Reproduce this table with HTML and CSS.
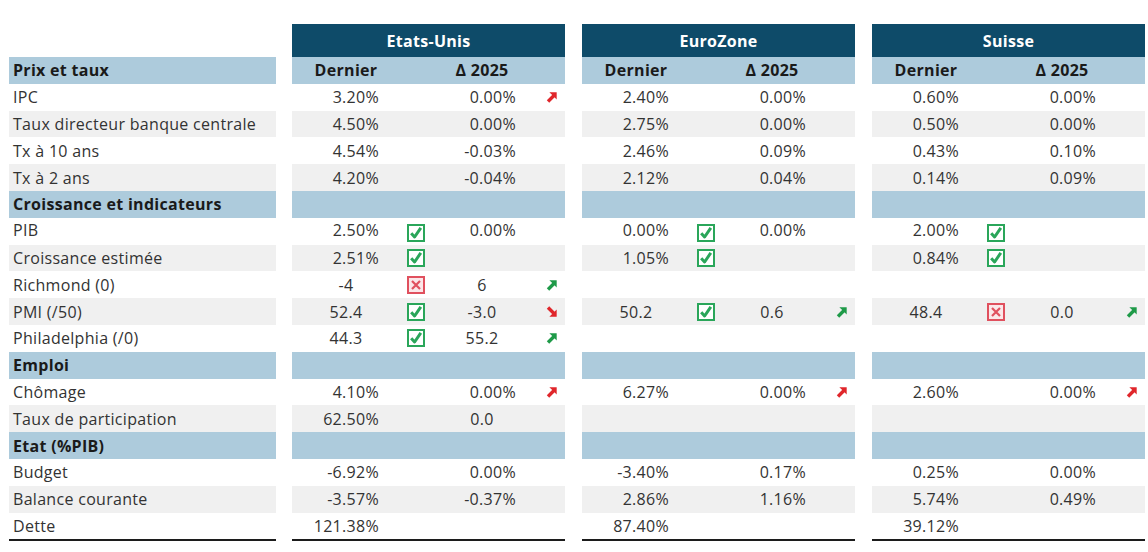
FILE: index.html
```html
<!DOCTYPE html>
<html lang="fr">
<head>
<meta charset="utf-8">
<title>Tableau macro</title>
<link rel="stylesheet" href="styles.css">
</head>
<body>
<svg width="0" height="0" class="defs">
  <defs>
    <symbol id="ok" viewBox="0 0 18 18"><rect x="1" y="1" width="16" height="16" fill="#fff" stroke="#2aa65a" stroke-width="2"/><path d="M4.2 9.2 L7.6 13 L13.8 3.8" fill="none" stroke="#2aa65a" stroke-width="3" stroke-linejoin="round"/></symbol>
    <symbol id="ko" viewBox="0 0 18 18"><rect x="1" y="1" width="16" height="16" fill="#fbe7e9" stroke="#e0505e" stroke-width="2"/><path d="M5 5 L13 13 M13 5 L5 13" fill="none" stroke="#e0505e" stroke-width="2.2"/></symbol>
    <symbol id="upr" viewBox="0 0 12 12"><path d="M2 10.5 L8 4.5" stroke="#e0262b" stroke-width="3.4"/><path d="M3.4 1.3 H10.7 V8.6 Z" fill="#e0262b"/></symbol>
    <symbol id="upg" viewBox="0 0 12 12"><path d="M2 10.5 L8 4.5" stroke="#1e9a48" stroke-width="3.4"/><path d="M3.4 1.3 H10.7 V8.6 Z" fill="#1e9a48"/></symbol>
    <symbol id="dnr" viewBox="0 0 12 12"><path d="M2 1.5 L8 7.5" stroke="#e0262b" stroke-width="3.4"/><path d="M3.4 10.7 H10.7 V3.4 Z" fill="#e0262b"/></symbol>
  </defs>
</svg>

<div class="sheet">
  <div class="labels">
    <div class="title blank"></div>
    <div class="row hdr"><span class="lab b">Prix et taux</span></div>
    <div class="row"><span class="lab">IPC</span></div>
    <div class="row alt"><span class="lab">Taux directeur banque centrale</span></div>
    <div class="row"><span class="lab">Tx à 10 ans</span></div>
    <div class="row alt"><span class="lab">Tx à 2 ans</span></div>
    <div class="row sec"><span class="lab b">Croissance et indicateurs</span></div>
    <div class="row hi"><span class="lab">PIB</span></div>
    <div class="row alt"><span class="lab">Croissance estimée</span></div>
    <div class="row"><span class="lab">Richmond (0)</span></div>
    <div class="row alt"><span class="lab">PMI (/50)</span></div>
    <div class="row"><span class="lab">Philadelphia (/0)</span></div>
    <div class="row sec"><span class="lab b">Emploi</span></div>
    <div class="row"><span class="lab">Chômage</span></div>
    <div class="row alt"><span class="lab">Taux de participation</span></div>
    <div class="row sec"><span class="lab b">Etat (%PIB)</span></div>
    <div class="row"><span class="lab">Budget</span></div>
    <div class="row alt"><span class="lab">Balance courante</span></div>
    <div class="row last"><span class="lab">Dette</span></div>
  </div>

  <div class="block">
    <div class="title">Etats-Unis</div>
    <div class="row grid hdr"><span class="h1">Dernier</span><span></span><span class="h2">Δ 2025</span><span></span></div>
    <div class="row grid"><span class="v">3.20%</span><span class="i"></span><span class="d">0.00%</span><span class="a"><svg><use href="#upr"/></svg></span></div>
    <div class="row grid alt"><span class="v">4.50%</span><span class="i"></span><span class="d">0.00%</span><span class="a"></span></div>
    <div class="row grid"><span class="v">4.54%</span><span class="i"></span><span class="d">-0.03%</span><span class="a"></span></div>
    <div class="row grid alt"><span class="v">4.20%</span><span class="i"></span><span class="d">-0.04%</span><span class="a"></span></div>
    <div class="row grid sec"></div>
    <div class="row grid hi"><span class="v">2.50%</span><span class="i"><svg><use href="#ok"/></svg></span><span class="d">0.00%</span><span class="a"></span></div>
    <div class="row grid alt"><span class="v">2.51%</span><span class="i"><svg><use href="#ok"/></svg></span><span class="d"></span><span class="a"></span></div>
    <div class="row grid"><span class="vc">-4</span><span class="i"><svg><use href="#ko"/></svg></span><span class="dc">6</span><span class="a"><svg><use href="#upg"/></svg></span></div>
    <div class="row grid alt"><span class="vc">52.4</span><span class="i"><svg><use href="#ok"/></svg></span><span class="dc">-3.0</span><span class="a"><svg><use href="#dnr"/></svg></span></div>
    <div class="row grid"><span class="vc">44.3</span><span class="i"><svg><use href="#ok"/></svg></span><span class="dc">55.2</span><span class="a"><svg><use href="#upg"/></svg></span></div>
    <div class="row grid sec"></div>
    <div class="row grid"><span class="v">4.10%</span><span class="i"></span><span class="d">0.00%</span><span class="a"><svg><use href="#upr"/></svg></span></div>
    <div class="row grid alt"><span class="v">62.50%</span><span class="i"></span><span class="dc">0.0</span><span class="a"></span></div>
    <div class="row grid sec"></div>
    <div class="row grid"><span class="v">-6.92%</span><span class="i"></span><span class="d">0.00%</span><span class="a"></span></div>
    <div class="row grid alt"><span class="v">-3.57%</span><span class="i"></span><span class="d">-0.37%</span><span class="a"></span></div>
    <div class="row grid last"><span class="v">121.38%</span><span class="i"></span><span class="d"></span><span class="a"></span></div>
  </div>

  <div class="block">
    <div class="title">EuroZone</div>
    <div class="row grid hdr"><span class="h1">Dernier</span><span></span><span class="h2">Δ 2025</span><span></span></div>
    <div class="row grid"><span class="v">2.40%</span><span class="i"></span><span class="d">0.00%</span><span class="a"></span></div>
    <div class="row grid alt"><span class="v">2.75%</span><span class="i"></span><span class="d">0.00%</span><span class="a"></span></div>
    <div class="row grid"><span class="v">2.46%</span><span class="i"></span><span class="d">0.09%</span><span class="a"></span></div>
    <div class="row grid alt"><span class="v">2.12%</span><span class="i"></span><span class="d">0.04%</span><span class="a"></span></div>
    <div class="row grid sec"></div>
    <div class="row grid hi"><span class="v">0.00%</span><span class="i"><svg><use href="#ok"/></svg></span><span class="d">0.00%</span><span class="a"></span></div>
    <div class="row grid alt"><span class="v">1.05%</span><span class="i"><svg><use href="#ok"/></svg></span><span class="d"></span><span class="a"></span></div>
    <div class="row grid"></div>
    <div class="row grid alt"><span class="vc">50.2</span><span class="i"><svg><use href="#ok"/></svg></span><span class="dc">0.6</span><span class="a"><svg><use href="#upg"/></svg></span></div>
    <div class="row grid"></div>
    <div class="row grid sec"></div>
    <div class="row grid"><span class="v">6.27%</span><span class="i"></span><span class="d">0.00%</span><span class="a"><svg><use href="#upr"/></svg></span></div>
    <div class="row grid alt"></div>
    <div class="row grid sec"></div>
    <div class="row grid"><span class="v">-3.40%</span><span class="i"></span><span class="d">0.17%</span><span class="a"></span></div>
    <div class="row grid alt"><span class="v">2.86%</span><span class="i"></span><span class="d">1.16%</span><span class="a"></span></div>
    <div class="row grid last"><span class="v">87.40%</span><span class="i"></span><span class="d"></span><span class="a"></span></div>
  </div>

  <div class="block">
    <div class="title">Suisse</div>
    <div class="row grid hdr"><span class="h1">Dernier</span><span></span><span class="h2">Δ 2025</span><span></span></div>
    <div class="row grid"><span class="v">0.60%</span><span class="i"></span><span class="d">0.00%</span><span class="a"></span></div>
    <div class="row grid alt"><span class="v">0.50%</span><span class="i"></span><span class="d">0.00%</span><span class="a"></span></div>
    <div class="row grid"><span class="v">0.43%</span><span class="i"></span><span class="d">0.10%</span><span class="a"></span></div>
    <div class="row grid alt"><span class="v">0.14%</span><span class="i"></span><span class="d">0.09%</span><span class="a"></span></div>
    <div class="row grid sec"></div>
    <div class="row grid hi"><span class="v">2.00%</span><span class="i"><svg><use href="#ok"/></svg></span><span class="d"></span><span class="a"></span></div>
    <div class="row grid alt"><span class="v">0.84%</span><span class="i"><svg><use href="#ok"/></svg></span><span class="d"></span><span class="a"></span></div>
    <div class="row grid"></div>
    <div class="row grid alt"><span class="vc">48.4</span><span class="i"><svg><use href="#ko"/></svg></span><span class="dc">0.0</span><span class="a"><svg><use href="#upg"/></svg></span></div>
    <div class="row grid"></div>
    <div class="row grid sec"></div>
    <div class="row grid"><span class="v">2.60%</span><span class="i"></span><span class="d">0.00%</span><span class="a"><svg><use href="#upr"/></svg></span></div>
    <div class="row grid alt"></div>
    <div class="row grid sec"></div>
    <div class="row grid"><span class="v">0.25%</span><span class="i"></span><span class="d">0.00%</span><span class="a"></span></div>
    <div class="row grid alt"><span class="v">5.74%</span><span class="i"></span><span class="d">0.49%</span><span class="a"></span></div>
    <div class="row grid last"><span class="v">39.12%</span><span class="i"></span><span class="d"></span><span class="a"></span></div>
  </div>
</div>
</body>
</html>
```

FILE: styles.css
```css
html, body {
  margin: 0;
  padding: 0;
  background: #ffffff;
}

body {
  font-family: "Open Sans", "Noto Sans", "DejaVu Sans", sans-serif;
  font-size: 16px;
  letter-spacing: 0.3px;
  color: #333333;
}

.defs {
  position: absolute;
  width: 0;
  height: 0;
  overflow: hidden;
}

.sheet {
  display: flex;
  gap: 16px;
  padding: 24px 0 0 9px;
}

.labels {
  width: 267px;
  display: flex;
  flex-direction: column;
}

.block {
  width: 273px;
  display: flex;
  flex-direction: column;
}

.block + .block {
  margin-left: 1px;
}

.title {
  height: 33px;
  display: flex;
  align-items: center;
  justify-content: center;
  background: #0e4b69;
  color: #ffffff;
  font-weight: 700;
  font-size: 16px;
}

.title.blank {
  background: transparent;
}

.row {
  height: 26.8px;
  display: flex;
  align-items: center;
  box-sizing: border-box;
}

.row.grid {
  display: grid;
  grid-template-columns: 108px 32px 100px 33px;
  align-items: center;
}

.row.alt {
  background: #f0f0f0;
}

.row.hdr,
.row.sec {
  background: #adcbdc;
}

.row.last {
  border-bottom: 2px solid #1c1c1c;
  height: 28.8px;
}

.lab {
  padding-left: 4px;
  white-space: nowrap;
}

.b {
  font-weight: 700;
  color: #1a1a1a;
}

.h1,
.h2 {
  text-align: center;
  font-weight: 700;
  color: #1a1a1a;
}

.v {
  text-align: right;
  padding-right: 21px;
}

.vc {
  text-align: center;
}

.d {
  text-align: right;
  padding-right: 16px;
}

.dc {
  text-align: center;
}

.i {
  display: flex;
  justify-content: center;
  align-items: center;
}

.i svg {
  width: 18px;
  height: 18px;
}

.a {
  display: flex;
  justify-content: center;
  align-items: center;
  padding-left: 6px;
}

.a svg {
  width: 12px;
  height: 12px;
}

.row.hi .v,
.row.hi .d,
.row.hi .lab {
  align-self: start;
  padding-top: 1px;
}

.row.hi .i {
  padding-top: 4px;
}
```
